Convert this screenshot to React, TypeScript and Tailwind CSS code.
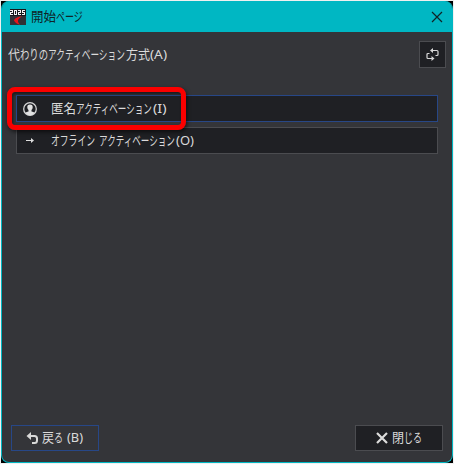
import React from 'react';
import { clsx } from 'clsx';

interface Run {
  text: string;
  width: number;
  // unscaled width of the run, squeezed to `width`
  natural?: number;
}

// UI text with condensed kana: each run is squeezed to its own width
function Label({ runs, className }: { runs: Run[]; className?: string }) {
  return (
    <span className={clsx('flex pb-[2px] whitespace-pre text-[13px] leading-[18px]', className)}>
      {runs.map((run, i) => (
        <span key={i} className="block shrink-0" style={{ width: run.width }}>
          <span
            className="block w-max origin-left"
            style={run.natural ? { transform: `scaleX(${run.width / run.natural})` } : undefined}
          >
            {run.text}
          </span>
        </span>
      ))}
    </span>
  );
}

const activation: Run = { text: 'アクティベーション', width: 77, natural: 117 };

function AppLogo() {
  return (
    <svg width="16" height="16" viewBox="0 0 16 16" shapeRendering="crispEdges">
      <rect width="16" height="16" fill="#303136" />
      <rect width="16" height="7" fill="#17181b" />
      <path
        d="M0 1h3v1H0zM2 2h1v1H2zM0 3h3v1H0zM0 4h1v1H0zM0 5h3v1H0zM4 1h3v1H4zM4 2h1v3H4zM6 2h1v3H6zM4 5h3v1H4zM8 1h3v1H8zM10 2h1v1h-1zM8 3h3v1H8zM8 4h1v1H8zM8 5h3v1H8zM12 1h3v1h-3zM12 2h1v1h-1zM12 3h3v1h-3zM14 4h1v1h-1zM12 5h3v1h-3z"
        fill="#f4f4f4"
      />
      <path
        d="M12 7.500C8 7.500 4.500 9.300 4 11.500c.8 1.700 2.800 3.500 6 4.300C8.500 14 7.800 12.800 8 11.500 8.300 9.800 10 8.500 12 7.500z"
        fill="#e5161b"
        shapeRendering="auto"
      />
    </svg>
  );
}

function CloseIcon() {
  return (
    <svg width="12" height="12" viewBox="0 0 12 12" fill="none" stroke="#102326" strokeWidth="1.2">
      <path d="M1 1l10 10M11 1L1 11" />
    </svg>
  );
}

function SwapIcon() {
  return (
    <svg width="13" height="13" viewBox="0 0 13 13" fill="none" stroke="#d8d8d8" strokeWidth="1.2">
      <path d="M3.500 5.500H2q-1 0-1 1V9.500q0 1 1 1H6M6 2.500h5q1 0 1 1V6.500q0 1-1 1H9.500" />
      <path d="M7 0v5L4 2.500zM5.500 8v5L8.500 10.500z" fill="#d8d8d8" stroke="none" />
    </svg>
  );
}

function PersonIcon() {
  return (
    <svg width="14" height="14" viewBox="0 0 14 14">
      <circle cx="7" cy="7" r="6.300" fill="none" stroke="#d5d5d5" strokeWidth="1.300" />
      <path
        d="M7 2.500c-2 0-2.900 1.200-2.700 2.700.1 1.300.6 2.200 1.200 2.700v1.700c-1.300.2-2.600.7-3 1.400C3.600 12.500 5.200 13.300 7 13.300s3.400-.8 4.500-2.300c-.4-.7-1.700-1.200-3-1.400V7.900c.6-.5 1.100-1.400 1.200-2.700.2-1.500-.7-2.700-2.700-2.700z"
        fill="#e2e2e2"
      />
    </svg>
  );
}

function ArrowIcon() {
  return (
    <svg width="14" height="14" viewBox="0 0 14 14">
      <path d="M3 6h6v1H3z" fill="#dedede" />
      <path d="M8 4l3 2.500L8 9z" fill="#dedede" />
    </svg>
  );
}

function BackIcon() {
  return (
    <svg width="13" height="13" viewBox="0 0 13 13">
      <path d="M3 4h5.500q2.500 0 2.500 2.500v2q0 2.500-2.500 2.500H6" fill="none" stroke="#d8d8d8" strokeWidth="2" />
      <path d="M5 0v8L.5 4z" fill="#d8d8d8" />
    </svg>
  );
}

function CrossIcon() {
  return (
    <svg width="12" height="12" viewBox="0 0 12 12" fill="none" stroke="#dcdcdc" strokeWidth="2.2">
      <path d="M1 1l10 10M11 1L1 11" />
    </svg>
  );
}

export default function App() {
  return (
    <div className="h-[464px] w-[454px] bg-[#f0f0f0] pt-px pl-px font-['Noto_Sans','Noto_Sans_CJK_JP',sans-serif]">
      <div className="h-[462px] w-[452px] bg-black">
        <div className="flex h-full w-full flex-col overflow-hidden rounded-[8px] border border-t-0 border-[#00b7c3] bg-[#343539] text-[#dadada]">
          <header className="flex h-[31px] shrink-0 items-center bg-[#00b7c3] pr-[9px] pl-2 text-[#102326]">
            <AppLogo />
            <Label
              className="ml-[5px]"
              runs={[
                { text: '開始', width: 25, natural: 26 },
                { text: 'ページ', width: 27, natural: 39 },
              ]}
            />
            <button className="ml-auto">
              <CloseIcon />
            </button>
          </header>

          <div className="mt-[9px] flex h-[27px] shrink-0 items-center justify-between pr-[6px] pl-[6px]">
            <Label
              runs={[
                { text: '代', width: 12, natural: 13 },
                { text: 'わりの', width: 28, natural: 39 },
                { ...activation, width: 78 },
                { text: '方式', width: 24, natural: 26 },
                { text: '(A)', width: 17, natural: 16.1 },
              ]}
            />
            <button className="flex h-[27px] w-[27px] items-center justify-center border border-[#4b4c50] bg-[#1f2024]">
              <SwapIcon />
            </button>
          </div>

          <main className="relative mt-[27px] flex flex-col gap-[5px] pr-[14px] pl-[14px]">
            <button className="flex h-[27px] w-full items-center border border-[#274787] bg-[#1f2024] pl-[6px]">
              <PersonIcon />
              <Label
                className="ml-[14px]"
                runs={[
                  { text: '匿名', width: 25, natural: 26 },
                  activation,
                  { text: '(I)', width: 14, natural: 12.6 },
                ]}
              />
            </button>
            <button className="flex h-[27px] w-full items-center border border-[#4b4c50] bg-[#1f2024] pl-[6px]">
              <ArrowIcon />
              <Label
                className="ml-[14px]"
                runs={[
                  { text: 'オフライン', width: 44, natural: 65 },
                  { text: ' ', width: 4 },
                  activation,
                  { text: '(O)', width: 18, natural: 18 },
                ]}
              />
            </button>
            {/* highlight around the first option */}
            <div className="pointer-events-none absolute -top-[8px] left-[5px] h-[43px] w-[179px] rounded-[8px] border-[5px] border-[#fb0000] shadow-[1px_2px_4px_rgba(0,0,0,0.6),inset_1px_2px_3px_rgba(0,0,0,0.5)]" />
          </main>

          <footer className="mt-auto mb-[11px] flex justify-between pr-[9px] pl-[9px]">
            <button className="flex h-[26px] w-[88px] items-center border border-[#274787] pl-[14px]">
              <BackIcon />
              <Label
                className="ml-[3px]"
                runs={[
                  { text: '戻', width: 12, natural: 13 },
                  { text: 'る', width: 9, natural: 13 },
                  { text: ' ', width: 4 },
                  { text: '(B)', width: 16, natural: 16.2 },
                ]}
              />
            </button>
            <button className="flex h-[26px] w-[88px] items-center border border-[#4b4c50] bg-[#1f2024] pl-[20px]">
              <CrossIcon />
              <Label
                className="ml-[4px]"
                runs={[
                  { text: '閉', width: 12, natural: 13 },
                  { text: 'じる', width: 18, natural: 26 },
                ]}
              />
            </button>
          </footer>
        </div>
      </div>
    </div>
  );
}
